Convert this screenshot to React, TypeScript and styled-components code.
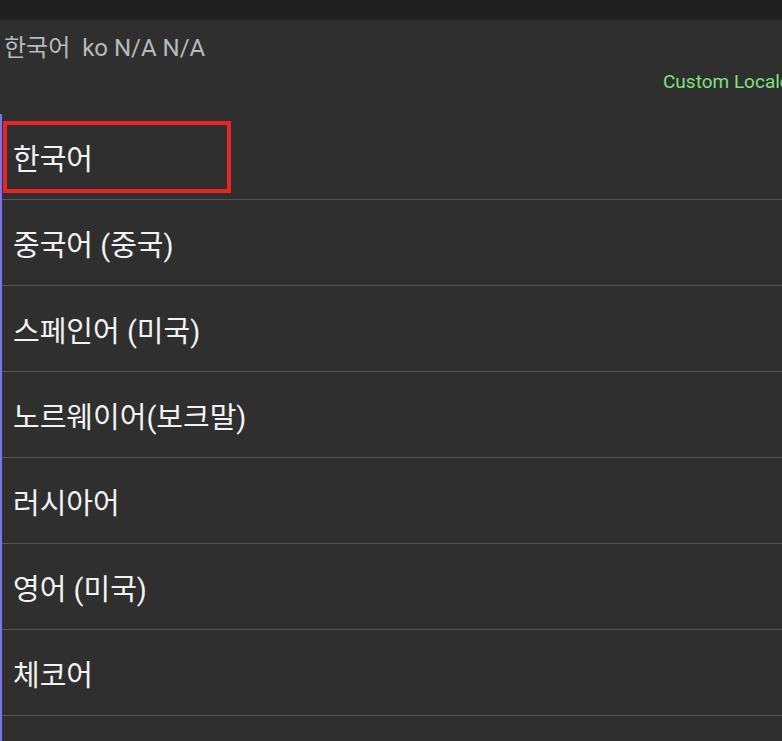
import React from "react";
import styled, { createGlobalStyle } from "styled-components";

const Global = createGlobalStyle`
  html, body {
    margin: 0;
    padding: 0;
    background: #2f2f2f;
    overflow: hidden;
  }
  body {
    font-family: Roboto, "Noto Sans CJK KR", sans-serif;
  }
`;

const Page = styled.div`
  width: 782px;
  height: 741px;
  display: flex;
  flex-direction: column;
  background: #2f2f2f;
  overflow: hidden;
`;

const TopBar = styled.div`
  height: 22px;
  flex: none;
  background: linear-gradient(#1e1e1e 0px, #1f1f1f 18px, #2a2a2a 21px, #2f2f2f 22px);
`;

const Header = styled.div`
  height: 46px;
  flex: none;
  display: flex;
  align-items: center;
  padding-left: 4px;
  font-family: Roboto, "Noto Sans CJK KR", sans-serif;
  font-size: 24px;
  color: #b9b9b9;
  white-space: pre;
`;

const SubHeader = styled.div`
  height: 46px;
  flex: none;
  display: flex;
  align-items: center;
  padding-left: 663px;
  padding-bottom: 20px;
  box-sizing: border-box;
  font-family: Roboto, sans-serif;
  font-size: 19px;
  color: #7fe07f;
  white-space: nowrap;
`;

const List = styled.div`
  flex: none;
  display: flex;
  flex-direction: column;
  border-left: 2px solid #7a74e8;
`;

const Row = styled.div`
  height: 85px;
  flex: none;
  display: flex;
  align-items: center;
  border-bottom: 1px solid #555555;
  padding-left: 11px;
  position: relative;
`;

const Label = styled.span`
  font-family: Roboto, "Noto Sans CJK KR", sans-serif;
  font-size: 29px;
  color: #f2f2f2;
  white-space: nowrap;
`;

const Highlight = styled.div`
  position: absolute;
  left: 1px;
  top: 7px;
  width: 228px;
  height: 72px;
  border: 4px solid #e8232a;
  box-sizing: border-box;
  pointer-events: none;
`;

const items = [
  "한국어",
  "중국어 (중국)",
  "스페인어 (미국)",
  "노르웨이어(보크말)",
  "러시아어",
  "영어 (미국)",
  "체코어",
  "",
];

export default function App() {
  return (
    <Page>
      <Global />
      <TopBar />
      <Header>{"한국어  ko N/A N/A"}</Header>
      <SubHeader>Custom Locale</SubHeader>
      <List>
        {items.map((t, i) => (
          <Row key={i}>
            {i === 0 && <Highlight />}
            <Label>{t}</Label>
          </Row>
        ))}
      </List>
    </Page>
  );
}
